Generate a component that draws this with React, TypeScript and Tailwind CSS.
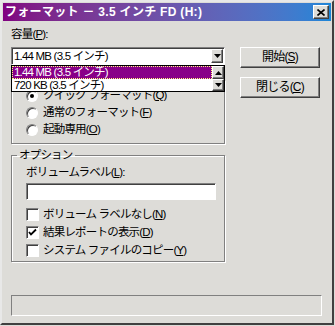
import React from 'react';

const font = { fontFamily: '"Liberation Sans", "Noto Sans CJK JP", sans-serif' };

const raised =
  'border border-t-white border-l-white border-r-[#404040] border-b-[#404040] shadow-[inset_-1px_-1px_0_#808080]';
const sunken =
  'border border-t-[#808080] border-l-[#808080] border-r-white border-b-white shadow-[inset_1px_1px_0_#404040]';

const Arrow: React.FC<{ up?: boolean }> = ({ up }) => (
  <svg width="7" height="4" viewBox="0 0 7 4" className={up ? 'rotate-180' : ''}>
    <path d="M0 0h7L3.5 4z" fill="#000" />
  </svg>
);

const ArrowButton: React.FC<{ up?: boolean; className?: string }> = ({ up, className = '' }) => (
  <div className={`flex items-center justify-center bg-[#dddcd8] ${raised} ${className}`}>
    <Arrow up={up} />
  </div>
);

const Radio: React.FC<{ label: React.ReactNode; checked?: boolean }> = ({ label, checked }) => (
  <div className="flex h-[17px] items-center">
    <div className={`flex h-[12px] w-[12px] items-center justify-center rounded-full bg-white ${sunken}`}>
      {checked && <div className="h-[4px] w-[4px] rounded-full bg-black" />}
    </div>
    <span className="ml-[5px]">{label}</span>
  </div>
);

const Check: React.FC<{ label: React.ReactNode; checked?: boolean }> = ({ label, checked }) => (
  <div className="flex h-[18px] items-center">
    <div className={`flex h-[13px] w-[13px] items-center justify-center bg-white ${sunken}`}>
      {checked && (
        <svg width="9" height="9" viewBox="0 0 9 9">
          <path d="M1 4l2 2.5L8 1.5" stroke="#000" strokeWidth="1.8" fill="none" />
        </svg>
      )}
    </div>
    <span className="ml-[4px]">{label}</span>
  </div>
);

const U: React.FC<{ children: React.ReactNode }> = ({ children }) => <span className="underline">{children}</span>;

const groupBox =
  'm-0 border border-[#808080] shadow-[inset_1px_1px_0_#fff,1px_1px_0_#fff] pl-[14px]';

export default function App() {
  return (
    <div
      className="h-[326px] w-[335px] bg-[#dddcd8] text-[11.5px] leading-[13px] tracking-[-0.8px] text-black"
      style={font}
    >
      <div className="h-[325px] w-[334px] border-2 border-t-[#e8e8e8] border-l-[#e8e8e8] border-r-[#404040] border-b-[#404040] p-[1px]">
        {/* title bar */}
        <div className="flex h-[18px] items-center justify-between bg-gradient-to-r from-[#800080] to-[#1a86d8] pl-[2px] pr-[2px]">
          <span className="text-[12px] font-bold tracking-[0.3px] text-white">フォーマット － 3.5 インチ FD (H:)</span>
          <div className={`flex h-[14px] w-[16px] items-center justify-center bg-[#dddcd8] ${raised}`}>
            <svg width="8" height="7" viewBox="0 0 8 7">
              <path d="M0.5 0.5l7 6M7.5 0.5l-7 6" stroke="#000" strokeWidth="1.6" />
            </svg>
          </div>
        </div>

        {/* body */}
        <div className="flex pl-[8px]">
          <div className="w-[214px]">
            <div className="mt-[6px] h-[14px] leading-[14px]">
              容量(<U>P</U>):
            </div>
            <div className="relative mt-[6px]">
              <div className={`flex h-[18px] items-center bg-white pl-[2px] ${sunken}`}>
                <span className="flex-1">1.44 MB (3.5 インチ)</span>
                <ArrowButton className="mr-[1px] h-[14px] w-[12px]" />
              </div>
              {/* open list */}
              <div className="absolute left-0 top-[18px] z-10 flex h-[27px] w-[214px] border border-black bg-white">
                <div className="flex-1">
                  <div className="flex h-[13px] items-center border border-dotted border-[#ffff80] bg-[#880088] pl-[1px] text-white">
                    1.44 MB (3.5 インチ)
                  </div>
                  <div className="flex h-[12px] items-center pl-[2px]">720 KB (3.5 インチ)</div>
                </div>
                <div className="flex w-[12px] flex-col">
                  <ArrowButton up className="h-[13px] w-[12px]" />
                  <ArrowButton className="h-[12px] w-[12px]" />
                </div>
              </div>
            </div>

            {/* format type group, its caption is covered by the open list */}
            <fieldset className={`${groupBox} mt-[15px] h-[64px] pt-[6px]`}>
              <Radio checked label={<>クイック フォーマット(<U>Q</U>)</>} />
              <Radio label={<>通常のフォーマット(<U>F</U>)</>} />
              <Radio label={<>起動専用(<U>O</U>)</>} />
            </fieldset>

            <fieldset className={`${groupBox} mt-[5px] h-[113px]`}>
              <legend className="-ml-[9px] px-[2px] leading-[12px]">オプション</legend>
              <div className="pt-[5px]">
                <div className="h-[13px]">
                  ボリュームラベル(<U>L</U>):
                </div>
                <div className={`mt-[4px] h-[17px] w-[190px] bg-white ${sunken}`} />
                <div className="mt-[5px]">
                  <Check label={<>ボリューム ラベルなし(<U>N</U>)</>} />
                  <Check checked label={<>結果レポートの表示(<U>D</U>)</>} />
                  <Check label={<>システム ファイルのコピー(<U>Y</U>)</>} />
                </div>
              </div>
            </fieldset>
          </div>

          <div className="ml-[15px] mt-[26px] flex flex-col gap-[9px]">
            <button className={`flex h-[21px] w-[80px] items-center justify-center bg-[#dddcd8] text-[12px] ${raised}`}>
              開始(<U>S</U>)
            </button>
            <button className={`flex h-[21px] w-[80px] items-center justify-center bg-[#dddcd8] text-[12px] ${raised}`}>
              閉じる(<U>C</U>)
            </button>
          </div>
        </div>

        <div className="ml-[8px] mt-[33px] h-[21px] w-[311px] border border-t-[#808080] border-l-[#808080] border-r-white border-b-white" />
      </div>
    </div>
  );
}
